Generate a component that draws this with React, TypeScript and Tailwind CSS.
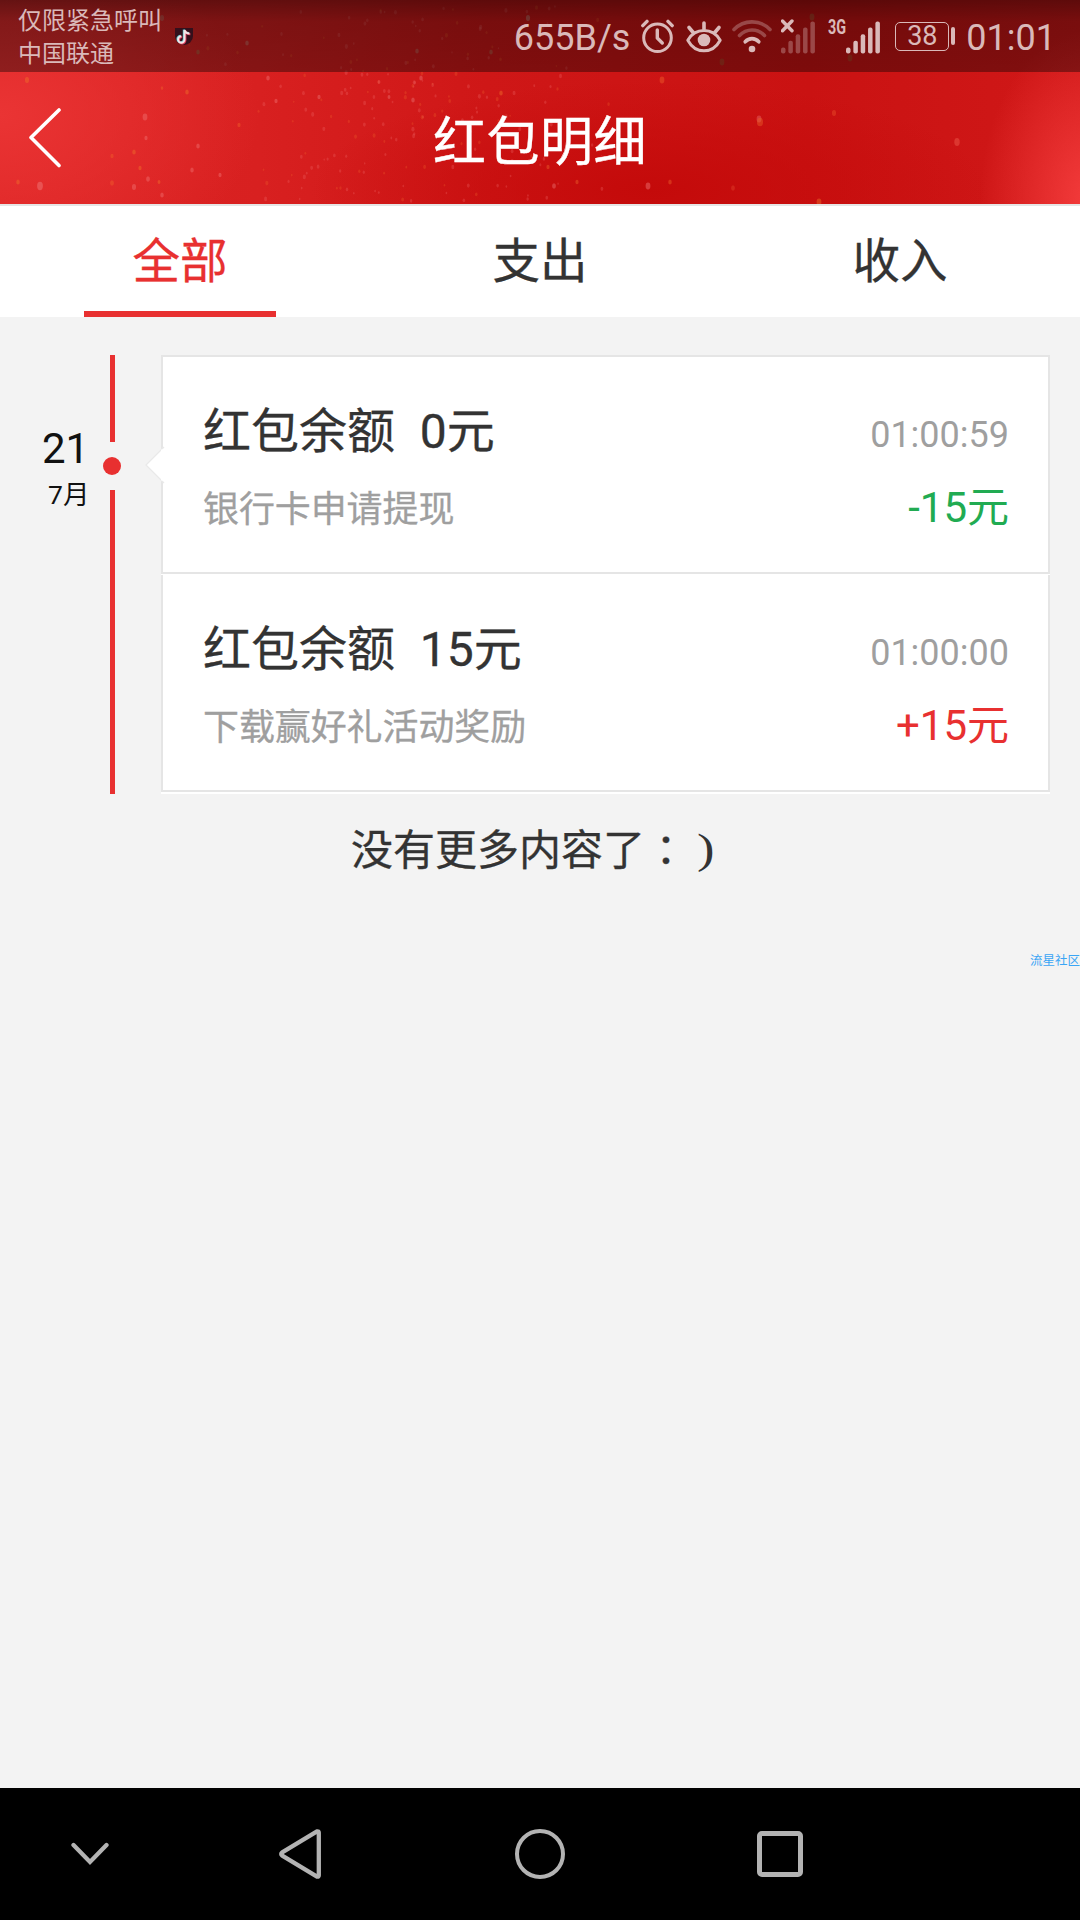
import { useState } from "react";
import clsx from "clsx";

interface RecordItem {
  id: number;
  balance: string;
  time: string;
  remark: string;
  amount: string;
  type: "expense" | "income";
}

const tabs = ["全部", "支出", "收入"];

const records: RecordItem[] = [
  { id: 1, balance: "0元", time: "01:00:59", remark: "银行卡申请提现", amount: "-15元", type: "expense" },
  { id: 2, balance: "15元", time: "01:00:00", remark: "下载赢好礼活动奖励", amount: "+15元", type: "income" },
];

// x, y, radius, colour of the bigger sparks in the header
const sparks: [number, number, number, string][] = [
  [27, 80, 2.6, "#f0702a"],
  [145, 117, 3, "#f07070"],
  [146, 138, 2, "#f07070"],
  [187, 92, 2.2, "#f0702a"],
  [162, 88, 1.6, "#f0602a"],
  [134, 152, 2.2, "#f0702a"],
  [140, 168, 2, "#f0702a"],
  [112, 156, 2, "#f0602a"],
  [40, 186, 3.6, "#f08080"],
  [18, 182, 2.2, "#f0702a"],
  [112, 183, 2.4, "#f0602a"],
  [134, 187, 2.6, "#f07070"],
  [148, 179, 2.4, "#f07070"],
  [159, 182, 1.8, "#f0702a"],
  [162, 195, 2.2, "#f07070"],
  [192, 170, 2.2, "#f07070"],
  [198, 146, 2.2, "#f07070"],
  [220, 175, 2, "#f07070"],
  [268, 78, 2.2, "#f07070"],
  [276, 101, 2, "#f07070"],
  [239, 125, 2, "#f0602a"],
  [319, 97, 2, "#e87070"],
  [421, 78, 2.2, "#e87070"],
  [413, 100, 2.2, "#e87070"],
  [389, 97, 1.8, "#e87070"],
  [501, 93, 2.2, "#f0702a"],
  [379, 82, 1.8, "#e86060"],
  [247, 43, 2.2, "#d09080"],
  [198, 52, 2.2, "#a08050"],
  [417, 51, 2.2, "#c08070"],
  [491, 52, 2.2, "#b08060"],
  [162, 18, 2.6, "#c08070"],
  [528, 18, 2.6, "#c0a090"],
  [722, 62, 3, "#a06030"],
  [812, 17, 3, "#a07040"],
  [850, 58, 3, "#a06030"],
  [662, 80, 3, "#f0602a"],
  [759, 119, 3, "#e86868"],
  [760, 122, 3.8, "#e8602a"],
  [834, 113, 2.6, "#e8502a"],
  [957, 142, 3.4, "#f06050"],
  [648, 186, 3, "#f07878"],
  [670, 182, 2.2, "#e8602a"],
  [554, 186, 2.4, "#e87070"],
  [577, 182, 2, "#e8602a"],
  [733, 188, 2.4, "#e0402a"],
  [819, 202, 3, "#e8702a"],
  [548, 167, 2, "#e8602a"],
];

const noise = (n: number) => {
  const v = Math.sin(n * 12.9898) * 43758.5453;
  return v - Math.floor(v);
};

// fine dust, densest between the back button and the title
const dust = Array.from({ length: 210 }, (_, i) => ({
  x: 180 + (noise(i + 1) + noise(i + 301)) * 220,
  y: 4 + noise(i + 601) * 198,
  r: 0.7 + noise(i + 901) * 0.9,
  fill: i % 3 === 0 ? "#f0602a" : "#f06868",
}));

function HeaderTexture() {
  return (
    <svg className="absolute inset-0" width="1080" height="204" viewBox="0 0 1080 204">
      {dust.map((d, i) => (
        <ellipse key={i} cx={d.x} cy={d.y} rx={d.r} ry={d.r * 1.5} fill={d.fill} opacity="0.3" />
      ))}
      {sparks.map(([x, y, r, fill], i) => (
        <ellipse key={i} cx={x} cy={y} rx={r * 0.8} ry={r * 1.15} fill={fill} opacity="0.45" />
      ))}
    </svg>
  );
}

function TikTokIcon() {
  return (
    <svg width="20" height="20" viewBox="0 0 20 20" fill="none">
      <path d="M1 1h18v8a9 9 0 0 1-18 0z" fill="#34101c" />
      <path d="M10.500 3v9.500a3.200 3.200 0 1 1-3.200-3.200M10.500 3c.4 2 2 3.300 5 3.500" stroke="#5cc8cc" strokeWidth="2" transform="translate(-.7 -.5)" />
      <path d="M10.500 3v9.500a3.200 3.200 0 1 1-3.200-3.200M10.500 3c.4 2 2 3.300 5 3.500" stroke="#e0405c" strokeWidth="2" transform="translate(.9 .7)" />
      <path d="M10.500 3v9.500a3.200 3.200 0 1 1-3.200-3.200M10.500 3c.4 2 2 3.300 5 3.500" stroke="#f3e6e8" strokeWidth="2" />
    </svg>
  );
}

function AlarmIcon() {
  return (
    <svg width="34" height="36" viewBox="0 0 34 36" fill="none" stroke="currentColor">
      <circle cx="16.500" cy="19.700" r="13.800" strokeWidth="3" />
      <path d="M16.300 12v8l5 5" strokeWidth="3.400" strokeLinecap="round" strokeLinejoin="round" />
      <path d="M1.800 7.600 6 3.400M31.200 7.600 27 3.400" strokeWidth="3.400" strokeLinecap="round" />
    </svg>
  );
}

function EyeIcon() {
  return (
    <svg width="36" height="36" viewBox="0 0 36 36" fill="none" stroke="currentColor">
      <path d="M1.800 22.200C5.500 16 11 12.600 18 12.600S30.500 16 34.200 22.200C30.500 29 25 32.800 18 32.800S5.500 29 1.800 22.200z" strokeWidth="3" strokeLinejoin="round" />
      <circle cx="18" cy="22" r="6.300" fill="currentColor" stroke="none" />
      <path d="M18 5v6M3 9.500l4.200 5M33 9.500l-4.200 5" strokeWidth="3.600" strokeLinecap="round" />
    </svg>
  );
}

function WifiIcon() {
  return (
    <svg width="40" height="36" viewBox="0 0 40 36" fill="none" stroke="currentColor" strokeWidth="3.600" strokeLinecap="round">
      <path d="M2 11.500c10-10.200 26-10.200 36 0" opacity="0.35" />
      <path d="M7.500 17.500c7-7.400 18-7.400 25 0" opacity="0.35" />
      <path d="M13.200 23.800c3.800-4.200 9.800-4.200 13.600 0" />
      <circle cx="20" cy="31" r="3.300" fill="currentColor" stroke="none" />
    </svg>
  );
}

function SignalBars({ faded }: { faded?: boolean }) {
  const tops = [29.5, 22.8, 16.3, 9.5, 3.5];
  return (
    <svg width="34" height="36" viewBox="0 0 34 36" className={faded ? "opacity-35" : ""}>
      {tops.map((y, i) => (
        <rect key={y} x={i * 7.35} y={y} width="4.500" height={35.5 - y} rx="2" fill="currentColor" />
      ))}
    </svg>
  );
}

function StatusBar() {
  return (
    <div className="relative flex h-[72px] items-start bg-gradient-to-b from-black/55 via-black/42 via-30% to-black/38 pl-[18px] text-[#dab9b9]">
      <div className="w-[156px] pt-[5px] text-[24px] leading-[33px]">
        <p>仅限紧急呼叫</p>
        <p>中国联通</p>
      </div>
      <div className="pt-[27px]">
        <TikTokIcon />
      </div>
      <div className="ml-auto flex h-[72px] items-center pr-[24px] text-[36px] leading-[72px]">
        <span className="pt-[3px]">655B/s</span>
        <span className="ml-[11px]">
          <AlarmIcon />
        </span>
        <span className="ml-[11px]">
          <EyeIcon />
        </span>
        <span className="ml-[10px]">
          <WifiIcon />
        </span>
        <span className="relative ml-[9px]">
          <SignalBars faded />
          <svg className="absolute top-[1px] left-0" width="13" height="14" viewBox="0 0 13 14" stroke="currentColor" strokeWidth="3.400">
            <path d="M1.500 2 11 11.800M11 2 1.500 11.800" strokeLinecap="round" />
          </svg>
        </span>
        <span className="relative ml-[31px]">
          <SignalBars />
          <span className="absolute top-[-1px] left-[-18px] origin-left scale-x-[0.72] text-[20px] leading-[20px] font-bold">3G</span>
        </span>
        <span className="ml-[15px] flex items-center gap-[2px]">
          <span className="flex h-[29px] w-[54px] items-center justify-center rounded-[5px] border-[1.500px] border-current text-[27px] leading-[27px]">38</span>
          <span className="h-[18px] w-[4px] rounded-[2px] bg-current" />
        </span>
        <span className="ml-[11px] pt-[3px]">01:01</span>
      </div>
    </div>
  );
}

function Header() {
  return (
    <header className="relative h-[204px] bg-[#cf1717] bg-[radial-gradient(ellipse_260px_170px_at_0px_115px,#ea3434_0%,#ea343400_100%),radial-gradient(ellipse_110px_170px_at_1090px_200px,#f43c3c_0%,#f43c3c00_100%),radial-gradient(ellipse_340px_110px_at_650px_190px,#c40a0a_0%,#c40a0a00_100%),linear-gradient(90deg,#dc2424_0%,#d82020_24%,#cf1717_45%,#ca1212_75%,#d01818_100%)]">
      <HeaderTexture />
      <StatusBar />
      <div className="relative flex h-[132px] items-center justify-center">
        <button type="button" className="absolute top-[36px] left-[27px]">
          <svg width="36" height="60" viewBox="0 0 36 60" fill="none" stroke="white" strokeWidth="3.600">
            <path d="M32 2 4 29.500 32 57.500" strokeLinecap="round" strokeLinejoin="round" />
          </svg>
        </button>
        <h1 className="pt-[9px] text-[53px] leading-[64px] tracking-[0.5px] text-white [-webkit-text-stroke:0.4px]">红包明细</h1>
      </div>
    </header>
  );
}

function RecordCard({ record, first }: { record: RecordItem; first: boolean }) {
  return (
    <div
      className={clsx(
        "border-2 border-[#e5e5e5] bg-white pr-[39px] pl-[40px] pt-[45px]",
        first ? "mb-px h-[219px]" : "mb-[2px] h-[217px] border-t-0"
      )}
    >
      <div className="flex h-[60px] items-center justify-between">
        <h2 className="text-[48px] leading-[60px] whitespace-pre text-[#333] [-webkit-text-stroke:0.3px]">
          红包余额<span className="ml-[1px]">{`  ${record.balance}`}</span>
        </h2>
        <span className="pt-[6px] text-[36px] leading-[52px] text-[#9f9f9f]">{record.time}</span>
      </div>
      <div className="mt-[24px] flex h-[48px] items-center justify-between">
        <span className="text-[36px] leading-[48px] tracking-[-0.1px] text-[#9f9f9f] [-webkit-text-stroke:0.3px]">{record.remark}</span>
        <span
          className={clsx(
            "pb-[4px] text-[42px] leading-[44px]",
            record.type === "income" ? "text-[#e83030]" : "text-[#21ab52]"
          )}
        >
          {record.amount}
        </span>
      </div>
    </div>
  );
}

function NavBar() {
  return (
    <nav className="flex h-[132px] items-center bg-black">
      <div className="flex w-[180px] justify-center">
        <svg width="40" height="24" viewBox="0 0 40 24" fill="none" stroke="#b3b3b3" strokeWidth="4.300">
          <path d="M3.500 3 20 20 36.500 3" strokeLinecap="round" />
        </svg>
      </div>
      <div className="flex w-[240px] justify-center">
        <svg width="44" height="52" viewBox="0 0 44 52" fill="none" stroke="#b3b3b3" strokeWidth="4.300">
          <path d="M39 3.400 4.200 24.300Q2.200 26 4.200 27.700L39 48.600Q40.800 49 40.800 47.200V4.800Q40.800 3 39 3.400z" strokeLinejoin="round" />
        </svg>
      </div>
      <div className="flex w-[240px] justify-center">
        <span className="size-[50px] rounded-full border-[4.500px] border-[#b3b3b3]" />
      </div>
      <div className="flex w-[240px] justify-center">
        <span className="size-[46px] rounded-[5px] border-[5px] border-[#b3b3b3]" />
      </div>
    </nav>
  );
}

export default function App() {
  const [active, setActive] = useState(0);

  return (
    <div className="flex h-[1920px] w-[1080px] flex-col overflow-hidden bg-[#f3f3f3] font-['Roboto','Noto_Sans_CJK_SC',sans-serif]">
      <Header />

      {/* Tabs */}
      <div className="flex h-[113px] border-t-2 border-[#e5e5e5] bg-white">
        {tabs.map((tab, i) => (
          <button
            key={tab}
            type="button"
            onClick={() => setActive(i)}
            className={clsx("flex w-[360px] flex-col items-center", active === i ? "text-[#e83030]" : "text-[#333]")}
          >
            <span className="h-[105px] pt-[4px] text-[47.500px] leading-[105px] [-webkit-text-stroke:0.3px]">{tab}</span>
            <span className={clsx("h-[6px] w-[192px]", active === i && "bg-[#e83030]")} />
          </button>
        ))}
      </div>

      <main className="flex-1 pt-[38px]">
        <section className="flex">
          {/* Date */}
          <div className="w-[103px] pt-[71px] text-[#111]">
            <p className="pl-[42px] text-[42px] leading-[46px]">21</p>
            <p className="pt-[6px] pl-[48px] text-[26.500px] leading-[34px]">7月</p>
          </div>

          {/* Timeline */}
          <div className="flex w-[18px] flex-col items-center">
            <span className="h-[87px] w-[5px] bg-[#e83030]" />
            <span className="my-[15px] size-[18px] rounded-full bg-[#e83030]" />
            <span className="w-[5px] flex-1 bg-[#e83030]" />
          </div>

          <div className="relative ml-[40px] w-[889px] bg-white">
            <svg className="absolute top-[91px] left-[-16px]" width="20" height="38" viewBox="0 0 20 38">
              <path d="M19 1 1 19l18 18" fill="white" stroke="#e9e9e9" strokeWidth="1.200" />
              <rect x="16" y="3.500" width="4" height="31" fill="white" />
            </svg>
            {records.map((record, i) => (
              <RecordCard key={record.id} record={record} first={i === 0} />
            ))}
          </div>
        </section>

        <p className="mt-[30px] flex justify-center text-[42px] leading-[54px] text-[#333] [-webkit-text-stroke:0.3px]">
          没有更多内容了
          <span className="-mt-[3px] w-[42px] text-center font-['Noto_Sans_CJK_TC',sans-serif]">：</span>
          <span className="-mt-[2px] w-[42px] pl-[10px] font-['Liberation_Serif',serif] [-webkit-text-stroke:0px]">
            <span className="inline-block origin-left scale-x-[1.25]">)</span>
          </span>
        </p>
        <p className="pt-[74px] text-right text-[12.500px] leading-[18px] text-[#3aa5f5]">流星社区</p>
      </main>

      <NavBar />
    </div>
  );
}
